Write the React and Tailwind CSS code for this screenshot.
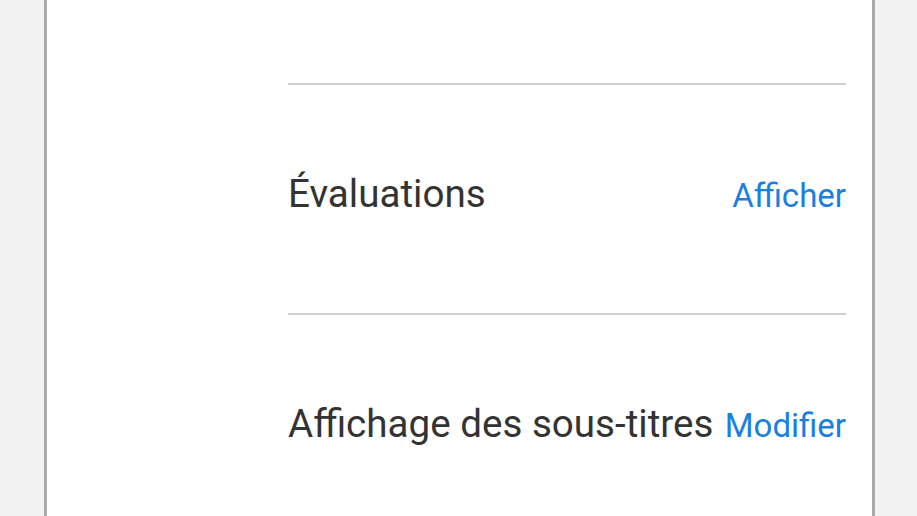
import React from "react";

const Row = ({ label, action }) => (
  <div className="border-t-2 border-[#cfcfcf] pt-[89px] pb-[97px]">
    <div className="flex items-baseline justify-between gap-[6px] whitespace-nowrap leading-[40px]">
      <span className="text-[38.6px] text-[#333333]">{label}</span>
      <span className="text-[33px] text-[#1a7fe3]">{action}</span>
    </div>
  </div>
);

const App = () => {
  return (
    <div
      className="h-[516px] w-full overflow-hidden bg-[#f2f2f2]"
      style={{ fontFamily: "Roboto, 'Noto Sans', sans-serif" }}
    >
      <div className="ml-[44px] h-full w-[831px] border-x-[3px] border-[#a9a9a9] bg-white">
        {/* Settings list */}
        <div className="pl-[241px] pr-[26px] pt-[83px]">
          <Row label="Évaluations" action="Afficher" />
          <Row label="Affichage des sous-titres" action="Modifier" />
        </div>
      </div>
    </div>
  );
};

export default App;
